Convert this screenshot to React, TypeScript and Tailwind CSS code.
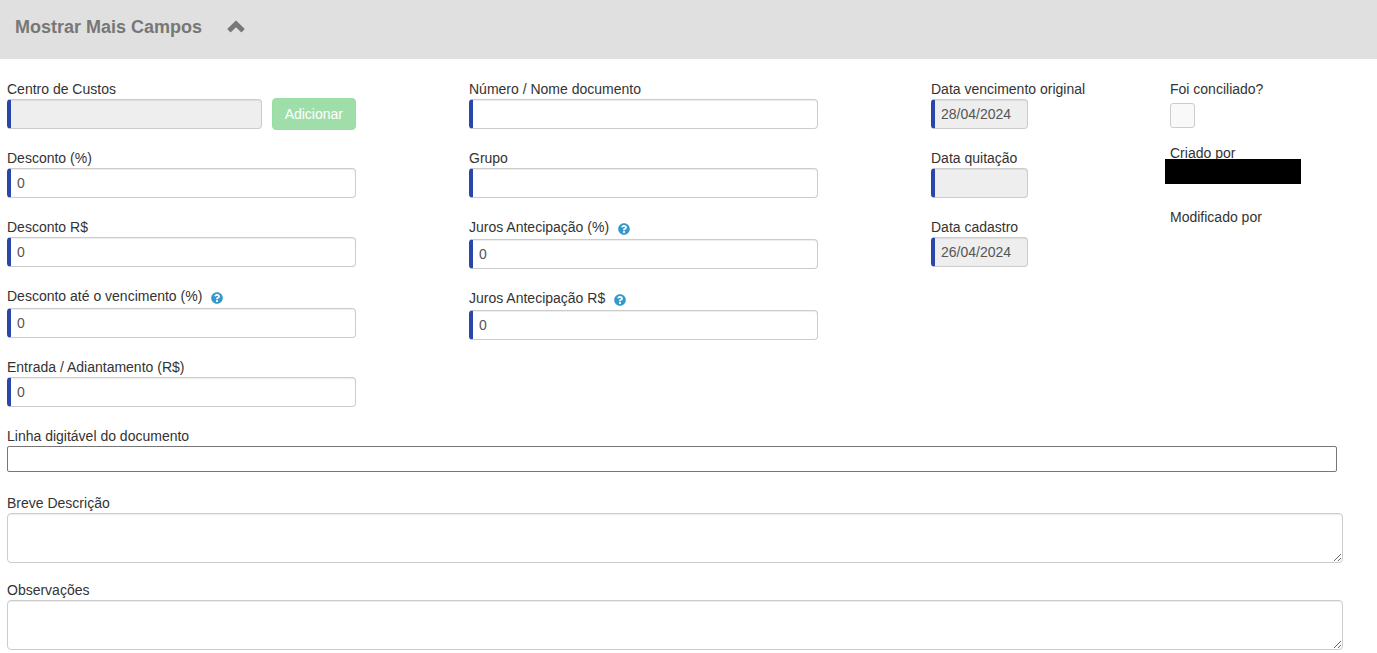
import { useState } from "react";
import type { ReactNode } from "react";
import { clsx } from "clsx";
import { FaQuestionCircle } from "react-icons/fa";

type FieldProps = {
  id: string;
  label: string;
  defaultValue?: string;
  disabled?: boolean;
  help?: boolean;
  className?: string;
  children?: ReactNode;
};

const Field = ({ id, label, defaultValue, disabled, help, className, children }: FieldProps) => (
  <div className={className}>
    <div className={clsx("flex items-start", help ? "h-[22px]" : "h-5")}>
      <label htmlFor={id}>{label}</label>
      {help && (
        <button type="button" aria-label={`Ajuda: ${label}`} className="mt-[6px] ml-[9px] text-[#3399cc]">
          <FaQuestionCircle size={12} />
        </button>
      )}
    </div>
    <div className="flex items-center gap-[10px]">
      <input
        id={id}
        type="text"
        defaultValue={defaultValue}
        disabled={disabled}
        className="h-[30px] w-full min-w-0 rounded border border-l-4 border-[#ccc] border-l-[#2a46a8] bg-white px-[6px] text-[#555] shadow-[inset_0_1px_1px_rgba(0,0,0,0.075)] outline-none disabled:bg-[#eee]"
      />
      {children}
    </div>
  </div>
);

const TextArea = ({ id, label }: { id: string; label: string }) => (
  <div>
    <label htmlFor={id} className="block">
      {label}
    </label>
    <textarea
      id={id}
      className="block h-[50px] w-full rounded border border-[#ccc] bg-white px-[6px] py-1 text-[#555] shadow-[inset_0_1px_1px_rgba(0,0,0,0.075)] outline-none"
    />
  </div>
);

const Chevron = ({ open }: { open: boolean }) => (
  <svg width="18" height="14" viewBox="0 0 18 14" className={clsx(!open && "rotate-180")} aria-hidden="true">
    <path
      d="M9.6 .9 17.3 8.6Q17.8 9.1 17.3 9.6L14.9 12Q14.4 12.5 13.9 12L9 7.2 4.1 12Q3.6 12.5 3.1 12L.7 9.6Q.2 9.1 .7 8.6L8.4 .9Q9 .3 9.6 .9Z"
      fill="#777"
    />
  </svg>
);

const App = () => {
  const [open, setOpen] = useState(true);

  return (
    <div className="bg-white font-['Liberation_Sans',Arial,sans-serif] text-[14px] leading-5 text-[#333]">
      <button
        type="button"
        onClick={() => setOpen(!open)}
        aria-expanded={open}
        className="flex h-[59px] w-full items-center gap-[25px] bg-[#e0e0e0] px-[15px] pb-[5px] text-[18px] font-bold text-[#777]"
      >
        Mostrar Mais Campos
        <Chevron open={open} />
      </button>

      {open && (
        <form className="px-[7px] pt-5 pb-[3px]">
          <div className="grid grid-cols-[minmax(0,462fr)_minmax(0,462fr)_minmax(0,239fr)_minmax(0,200fr)]">
            <div className="space-y-[19px] pr-[113px]">
              <Field id="centro-custos" label="Centro de Custos" disabled>
                <button
                  type="button"
                  disabled
                  className="-my-px h-8 rounded border border-[#98dfa4] bg-[#9fdea8] px-3 text-white"
                >
                  Adicionar
                </button>
              </Field>
              <Field id="desconto-pct" label="Desconto (%)" defaultValue="0" />
              <Field id="desconto-valor" label="Desconto R$" defaultValue="0" />
              <Field id="desconto-vencimento" label="Desconto até o vencimento (%)" defaultValue="0" help />
              <Field id="entrada" label="Entrada / Adiantamento (R$)" defaultValue="0" />
            </div>

            <div className="space-y-[19px] pr-[113px]">
              <Field id="numero-documento" label="Número / Nome documento" />
              <Field id="grupo" label="Grupo" />
              <Field id="juros-pct" label="Juros Antecipação (%)" defaultValue="0" help />
              <Field id="juros-valor" label="Juros Antecipação R$" defaultValue="0" help />
            </div>

            <div className="space-y-[19px] pr-[142px] whitespace-nowrap">
              <Field id="data-vencimento" label="Data vencimento original" defaultValue="28/04/2024" disabled />
              <Field id="data-quitacao" label="Data quitação" disabled />
              <Field id="data-cadastro" label="Data cadastro" defaultValue="26/04/2024" disabled />
            </div>

            <div>
              <div className="h-16">
                <label htmlFor="conciliado" className="block">
                  Foi conciliado?
                </label>
                <input
                  id="conciliado"
                  type="checkbox"
                  className="mt-1 block size-[25px] appearance-none rounded-[3px] border border-[#ccc] bg-[#f9f9f9] checked:bg-[#2a46a8]"
                />
              </div>
              <div className="relative h-16">
                <div>Criado por</div>
                {/* hidden user name */}
                <div className="absolute top-4 -left-[5px] h-[25px] w-[136px] bg-black" />
              </div>
              <div>Modificado por</div>
            </div>
          </div>

          <div className="mt-[19px] pr-[27px]">
            <div className="mb-[21px] pr-[6px]">
              <label htmlFor="linha-digitavel" className="block">
                Linha digitável do documento
              </label>
              <input
                id="linha-digitavel"
                type="text"
                className="block h-[26px] w-full rounded-[2px] border border-[#767676] bg-white px-1"
              />
            </div>
            <div className="space-y-[17px]">
              <TextArea id="breve-descricao" label="Breve Descrição" />
              <TextArea id="observacoes" label="Observações" />
            </div>
          </div>
        </form>
      )}
    </div>
  );
};

export default App;
